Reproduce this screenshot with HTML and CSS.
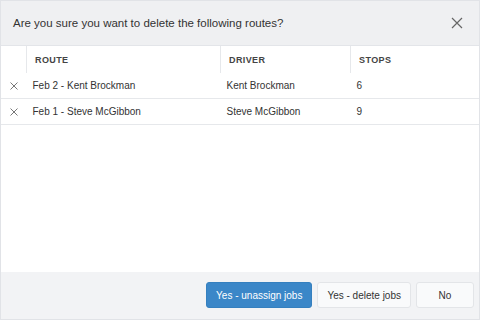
FILE: index.html
```html
<!DOCTYPE html>
<html lang="en">
<head>
  <meta charset="UTF-8">
  <title>Delete routes</title>
  <link rel="stylesheet" href="styles.css">
</head>
<body>
  <div class="dialog">
    <div class="dialog-header">
      <h2 class="dialog-title">Are you sure you want to delete the following routes?</h2>
      <button class="close-btn" type="button" aria-label="Close">
        <svg width="12" height="12" viewBox="0 0 12 12"><path d="M1 1L11 11M11 1L1 11" stroke="#666" stroke-width="1.2" fill="none"/></svg>
      </button>
    </div>

    <div class="dialog-body">
      <table class="routes">
        <thead>
          <tr>
            <th class="col-remove"></th>
            <th class="col-route">Route</th>
            <th class="col-driver">Driver</th>
            <th>Stops</th>
          </tr>
        </thead>
        <tbody>
          <tr>
            <td class="col-remove"><svg width="8" height="8" viewBox="0 0 8 8"><path d="M0.5 0.5L7.5 7.5M7.5 0.5L0.5 7.5" stroke="#777" stroke-width="1" fill="none"/></svg></td>
            <td>Feb 2 - Kent Brockman</td>
            <td>Kent Brockman</td>
            <td>6</td>
          </tr>
          <tr>
            <td class="col-remove"><svg width="8" height="8" viewBox="0 0 8 8"><path d="M0.5 0.5L7.5 7.5M7.5 0.5L0.5 7.5" stroke="#777" stroke-width="1" fill="none"/></svg></td>
            <td>Feb 1 - Steve McGibbon</td>
            <td>Steve McGibbon</td>
            <td>9</td>
          </tr>
        </tbody>
      </table>
    </div>

    <div class="dialog-footer">
      <button class="btn btn-primary" type="button">Yes - unassign jobs</button>
      <button class="btn" type="button">Yes - delete jobs</button>
      <button class="btn btn-no" type="button">No</button>
    </div>
  </div>
</body>
</html>
```

FILE: styles.css
```css
body {
  margin: 0;
  font-family: "Liberation Sans", Arial, sans-serif;
  color: #333;
}

.dialog {
  width: 480px;
  height: 320px;
  box-sizing: border-box;
  border: 1px solid #e1e3e7;
  display: flex;
  flex-direction: column;
  background: #fff;
}

.dialog-header {
  height: 44px;
  background: #eff0f2;
  border-bottom: 1px solid #e3e5e9;
  display: flex;
  align-items: center;
  justify-content: space-between;
  padding: 0 14px 0 12px;
}

.dialog-title {
  margin: 0;
  font-size: 11.5px;
  font-weight: normal;
  color: #333;
}

.close-btn {
  border: 0;
  background: none;
  padding: 0;
  width: 16px;
  height: 16px;
  display: flex;
  align-items: center;
  justify-content: center;
}

.dialog-body {
  flex: 1;
}

.routes {
  width: 100%;
  border-collapse: collapse;
  font-size: 10px;
}

.routes th {
  height: 27px;
  padding: 0 0 0 8px;
  text-align: left;
  font-size: 9px;
  font-weight: bold;
  letter-spacing: 0.4px;
  text-transform: uppercase;
  color: #444;
  border-left: 1px solid #e6e8eb;
}

.routes th:first-child {
  border-left: 0;
}

.routes td {
  height: 25px;
  padding: 0 0 0 6px;
  border-bottom: 1px solid #e6e8eb;
}

.routes .col-remove {
  width: 25px;
  padding: 0;
  text-align: center;
}

.routes td.col-remove svg {
  display: block;
  margin: 0 auto;
}

.routes .col-route {
  width: 185px;
}

.routes .col-driver {
  width: 121px;
}

.dialog-footer {
  height: 47px;
  box-sizing: border-box;
  background: #f2f3f5;
  display: flex;
  justify-content: flex-end;
  align-items: flex-start;
  gap: 5px;
  padding: 10px 5px 0;
}

.btn {
  height: 26px;
  padding: 0 9px;
  border: 1px solid #e3e5e8;
  border-radius: 3px;
  background: #f9fafb;
  font-family: "Liberation Sans", Arial, sans-serif;
  font-size: 10px;
  color: #333;
}

.btn-primary {
  background: #3b87c8;
  border-color: #3580bf;
  color: #fff;
}

.btn-no {
  width: 58px;
}
```
